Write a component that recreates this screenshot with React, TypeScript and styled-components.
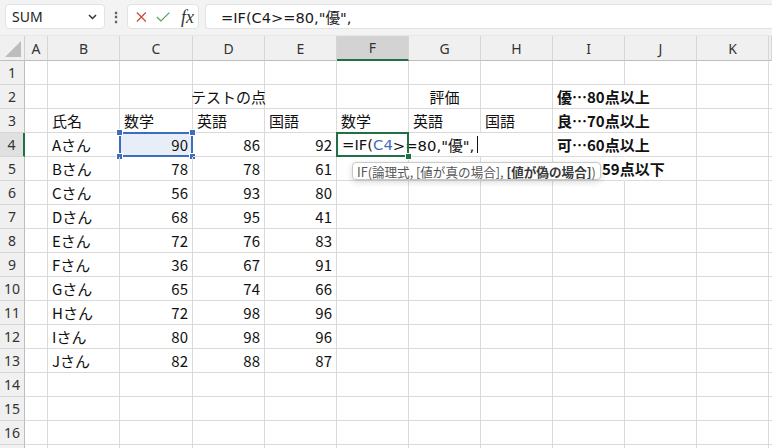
import React from 'react';
import styled, { createGlobalStyle } from 'styled-components';

const JP = `"Noto Sans CJK JP", "Noto Sans", sans-serif`;
const UI = `"Noto Sans", "Liberation Sans", sans-serif`;
const FORMULA = `"DejaVu Sans", "Noto Sans CJK JP", sans-serif`;
const GREEN = '#1f7145';
const BLUE = '#3d6dbd';

const GlobalStyle = createGlobalStyle`
  html, body { margin: 0; padding: 0; background: #fff; overflow: hidden; }
  body { font-family: ${JP}; }
`;

// ---------- formula bar ----------
const Window = styled.div`
  width: 772px; height: 448px; overflow: hidden; background: #fff;
`;

const Toolbar = styled.div`
  height: 36px; box-sizing: border-box; background: #f3f3f3; display: flex; align-items: flex-start; padding: 4px 0 0 5px; border-bottom: 1px solid #e6e6e6;
`;

const NameBox = styled.div`
  width: 100px; height: 25px; box-sizing: border-box; background: #fff; border: 1px solid #e2e2e2; border-radius: 4px; display: flex; align-items: center; justify-content: space-between; padding: 0 7px 0 6px; font: 14px ${UI}; color: #222;
`;

const Dots = styled.div`
  width: 22px; height: 25px; display: flex; align-items: center; justify-content: center; color: #555; font: bold 14px ${UI};
`;

const FxBox = styled.div`
  width: 72px; height: 25px; box-sizing: border-box; background: #fff; border: 1px solid #e2e2e2; border-radius: 4px; display: flex; align-items: center; padding: 0 4px 0 8px; gap: 9px; margin-right: 6px;
`;

const FxLabel = styled.span`
  font: italic 18px "Liberation Serif", "DejaVu Serif", serif; color: #333; margin-left: 2px; line-height: 1;
`;

const FormulaInput = styled.div`
  flex: 1; height: 25px; box-sizing: border-box; background: #fff; border: 1px solid #e2e2e2; border-right: none; border-radius: 4px 0 0 4px; padding-left: 15px; display: flex; align-items: center; font: 14.6px ${FORMULA}; color: #1a1a1a; white-space: nowrap;
`;

// ---------- sheet ----------
const COL_W = [25, 23, 72, 73, 72, 72, 72, 72, 72, 72, 72, 72, 3];

const Sheet = styled.div`
  display: grid; grid-template-columns: ${COL_W.map((w) => w + 'px').join(' ')}; grid-template-rows: 25px repeat(17, 24px);
`;

const Corner = styled.div`
  background: #f0f0f0; border-right: 1px solid #cfcfcf; border-bottom: 1px solid #bdbdbd; position: relative;
  &::after { content: ''; position: absolute; right: 3px; bottom: 3px; border-style: solid; border-width: 0 0 16px 16px; border-color: transparent transparent #bcbcbc transparent; }
`;

const ColHead = styled.div<{ $active?: boolean }>`
  background: ${(p) => (p.$active ? '#d3d3d3' : '#f0f0f0')}; border-right: 1px solid #d6d6d6; border-bottom: ${(p) => (p.$active ? `2px solid ${GREEN}` : '1px solid #bdbdbd')}; display: flex; align-items: center; justify-content: center; font: 14px ${UI}; color: #333; box-sizing: border-box;
`;

const RowHead = styled.div<{ $active?: boolean }>`
  background: ${(p) => (p.$active ? '#e0e0e0' : '#f0f0f0')}; border-right: ${(p) => (p.$active ? `2px solid ${GREEN}` : '1px solid #bdbdbd')}; border-bottom: 1px solid #d6d6d6; display: flex; align-items: center; justify-content: center; font: 14px ${UI}; color: #333; box-sizing: border-box;
`;

const Cell = styled.div<{ $align?: string; $bold?: boolean; $noRight?: boolean; $fill?: string }>`
  position: relative; box-sizing: border-box; min-width: 0; border-right: 1px solid ${(p) => (p.$noRight ? 'transparent' : '#dadada')}; border-bottom: 1px solid #dadada; background: ${(p) => p.$fill || 'transparent'}; display: flex; align-items: center; justify-content: ${(p) => (p.$align === 'right' ? 'flex-end' : p.$align === 'center' ? 'center' : 'flex-start')}; padding: 0 4px 0 4px; font: ${(p) => (p.$bold ? 'bold' : 'normal')} 15px ${JP}; color: #111; white-space: nowrap; line-height: 1;
`;

const SelFrame = styled.div`
  position: absolute; left: -1px; top: -1px; right: -1px; bottom: -1px; border: 2px solid ${BLUE}; pointer-events: none;
`;

const Handle = styled.div<{ $x: 'l' | 'r'; $y: 't' | 'b'; $color: string }>`
  position: absolute; width: 5px; height: 5px; background: ${(p) => p.$color}; border: 1px solid #fff;
  ${(p) => (p.$x === 'l' ? 'left: -5px;' : 'right: -5px;')}
  ${(p) => (p.$y === 't' ? 'top: -5px;' : 'bottom: -5px;')}
`;

const Editor = styled.div`
  position: absolute; left: 0; top: 0; bottom: 0; width: 143px; background: #fff; z-index: 4; display: flex; align-items: center; padding-left: 5px; font: 14.8px ${FORMULA}; color: #111; white-space: nowrap;
`;

const EditFrame = styled.div`
  position: absolute; left: -1px; top: -1px; right: -1px; bottom: -1px; border: 2px solid ${GREEN}; z-index: 5;
`;

const Ref = styled.span`
  color: #3f6fb8;
`;

const Caret = styled.span`
  display: inline-block; width: 1px; height: 17px; background: #111; margin-left: 3px;
`;

const Tooltip = styled.div`
  position: absolute; left: 15px; top: 29px; height: 18px; box-sizing: border-box; padding: 0 4px 0 4px; background: #fff; border: 1px solid #c9c9c9; border-radius: 4px; box-shadow: 0 2px 6px rgba(0, 0, 0, 0.16); display: flex; align-items: center; font: 12.6px ${JP}; color: #555; white-space: pre; z-index: 10;
`;

const Strong = styled.b`
  color: #3a3a3a;
`;

// ---------- data ----------
const LETTERS = ['A', 'B', 'C', 'D', 'E', 'F', 'G', 'H', 'I', 'J', 'K', ''];

const SCORES: [string, number, number, number][] = [
  ['Aさん', 90, 86, 92],
  ['Bさん', 78, 78, 61],
  ['Cさん', 56, 93, 80],
  ['Dさん', 68, 95, 41],
  ['Eさん', 72, 76, 83],
  ['Fさん', 36, 67, 91],
  ['Gさん', 65, 74, 66],
  ['Hさん', 72, 98, 96],
  ['Iさん', 80, 98, 96],
  ['Jさん', 82, 88, 87],
];

type CellData = { text?: string; align?: string; bold?: boolean };

const buildGrid = () => {
  const grid: Record<string, CellData> = {};
  grid['2,3'] = { text: 'テストの点', align: 'center' };
  grid['2,6'] = { text: '評価', align: 'center' };
  grid['2,8'] = { text: '優…80点以上', bold: true };
  ['氏名', '数学', '英語', '国語', '数学', '英語', '国語'].forEach((t, i) => {
    grid[`3,${i + 1}`] = { text: t };
  });
  grid['3,8'] = { text: '良…70点以上', bold: true };
  grid['4,8'] = { text: '可…60点以上', bold: true };
  grid['5,8'] = { text: '不可…59点以下', bold: true };
  SCORES.forEach((s, i) => {
    const r = i + 4;
    grid[`${r},1`] = { text: s[0] };
    grid[`${r},2`] = { text: String(s[1]), align: 'right' };
    grid[`${r},3`] = { text: String(s[2]), align: 'right' };
    grid[`${r},4`] = { text: String(s[3]), align: 'right' };
  });
  return grid;
};

const GRID = buildGrid();

const App = () => {
  const rows = Array.from({ length: 17 }, (_, i) => i + 1);

  return (
    <Window>
      <GlobalStyle />
      <Toolbar>
        <NameBox>
          SUM
          <svg width="9" height="6" viewBox="0 0 9 6">
            <path d="M1 1L4.5 4.5L8 1" stroke="#333" strokeWidth="1.5" fill="none" />
          </svg>
        </NameBox>
        <Dots>⋮</Dots>
        <FxBox>
          <svg width="12" height="12" viewBox="0 0 12 12">
            <path d="M1 1L11 11M11 1L1 11" stroke="#c8453c" strokeWidth="1.3" fill="none" />
          </svg>
          <svg width="16" height="12" viewBox="0 0 16 12">
            <path d="M1 6L5.5 10.5L15 1" stroke="#4c9f5e" strokeWidth="1.3" fill="none" />
          </svg>
          <FxLabel>fx</FxLabel>
        </FxBox>
        <FormulaInput>=IF(C4&gt;=80,"優",</FormulaInput>
      </Toolbar>

      <Sheet>
        <Corner />
        {LETTERS.map((l, i) => (
          <ColHead key={i} $active={l === 'F'}>
            {l}
          </ColHead>
        ))}
        {rows.map((r) => (
          <React.Fragment key={r}>
            <RowHead $active={r === 4}>{r}</RowHead>
            {LETTERS.map((_, c) => {
              const d = GRID[`${r},${c}`] || {};
              const isC4 = r === 4 && c === 2;
              const isF4 = r === 4 && c === 5;
              const noRight = c === 8 && r >= 2 && r <= 5;
              return (
                <Cell
                  key={c}
                  $align={d.align}
                  $bold={d.bold}
                  $noRight={noRight}
                  $fill={isC4 ? '#e8eef8' : undefined}
                >
                  {d.text}
                  {isC4 && (
                    <SelFrame>
                      <Handle $x="l" $y="t" $color={BLUE} />
                      <Handle $x="r" $y="t" $color={BLUE} />
                      <Handle $x="l" $y="b" $color={BLUE} />
                      <Handle $x="r" $y="b" $color={BLUE} />
                    </SelFrame>
                  )}
                  {isF4 && (
                    <>
                      <Editor>
                        =IF(<Ref>C4</Ref>&gt;=80,"優",
                        <Caret />
                      </Editor>
                      <EditFrame>
                        <Handle $x="r" $y="b" $color={GREEN} />
                      </EditFrame>
                      <Tooltip>
                        {'IF(論理式, [値が真の場合], '}
                        <Strong>[値が偽の場合]</Strong>
                        {')'}
                      </Tooltip>
                    </>
                  )}
                </Cell>
              );
            })}
          </React.Fragment>
        ))}
      </Sheet>
    </Window>
  );
};

export default App;
